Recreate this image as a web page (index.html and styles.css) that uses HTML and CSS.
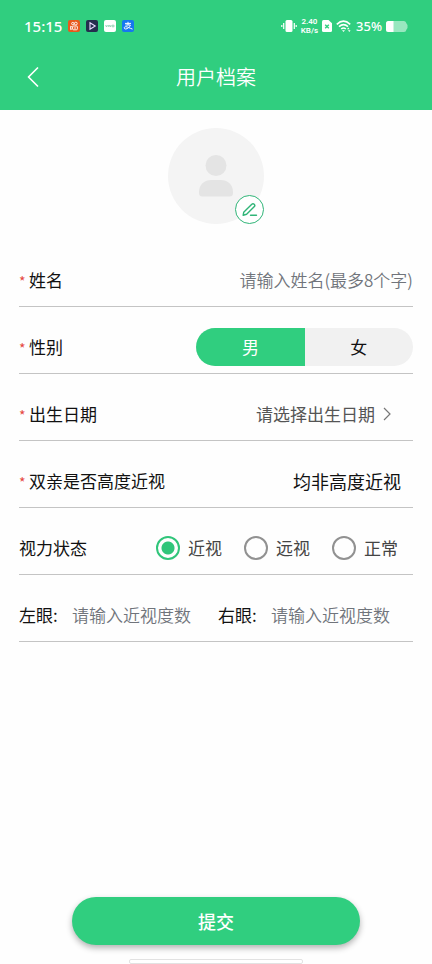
FILE: index.html
```html
<!DOCTYPE html>
<html lang="zh-CN">
<head>
<meta charset="utf-8">
<meta name="viewport" content="width=device-width, initial-scale=1">
<title>用户档案</title>
<link rel="stylesheet" href="styles.css">
</head>
<body>
<header class="header">
  <div class="status">
    <div class="status-group">
      <span class="clock">15:15</span>
      <svg class="app" viewBox="0 0 12 12" aria-hidden="true"><rect width="12" height="12" rx="2" fill="#e8591c"/><g fill="none" stroke="#fff" stroke-width=".9"><circle cx="4.8" cy="3.6" r="1.2"/><circle cx="7.8" cy="3.6" r="1.4"/><rect x="4.6" y="6" width="4.8" height="3.8" rx="1"/><path d="M4.6 7.2L2.6 6.3v3.2l2-.9M6 8h2"/></g></svg>
      <svg class="app" viewBox="0 0 12 12" aria-hidden="true"><rect width="12" height="12" rx="2" fill="#242e4e"/><path d="M4 2.800L9.200 6 4 9.200z" fill="none" stroke="#e9dcff" stroke-width="1.100"/></svg>
      <svg class="app" viewBox="0 0 12 12" aria-hidden="true"><rect width="12" height="12" rx="2" fill="#fff"/><path d="M1.600 5l.9 2 .9-2M4.400 5v2M5.300 5l.9 2 .9-2M8 5.200h2v1.600H8z" fill="none" stroke="#7cc9a5" stroke-width=".7"/></svg>
      <svg class="app" viewBox="0 0 12 12" aria-hidden="true"><rect width="12" height="12" rx="2" fill="#1677f0"/><path d="M3 3.400h6M6 1.800v3.200M3.400 5h5C7.800 7 5.600 9 3.600 9 1.800 9 1.800 6.700 3.700 6.700c2 0 4 1.500 6.800 2.400" fill="none" stroke="#fff" stroke-width="1"/></svg>
    </div>
    <div class="status-group status-right">
      <svg class="vibrate" viewBox="0 0 16 14" aria-hidden="true"><rect x="4.500" y="1" width="7" height="12" rx="1.500" fill="#fff"/><path d="M2.700 4v6M13.300 4v6M.8 6v2M15.200 6v2" stroke="#fff" stroke-width="1.200"/></svg>
      <span class="speed"><span>2.40</span><span>KB/s</span></span>
      <svg class="sim" viewBox="0 0 10 12" aria-hidden="true"><path d="M1.500 0H6.500L10 3.200V10.500Q10 12 8.500 12H1.500Q0 12 0 10.500V1.500Q0 0 1.500 0z" fill="#fff"/><path d="M3.200 4.700l3.600 3.600M6.800 4.700L3.200 8.300" stroke="#30ce7f" stroke-width="1.400"/></svg>
      <svg class="wifi" viewBox="0 0 16 12" aria-hidden="true"><path d="M.8 4.300Q7.500-2 14.200 4.300M3 6.700q4.500-4 9 0M5.200 9q2.300-2 4.600 0" fill="none" stroke="#fff" stroke-width="1.600"/><path d="M6 10.200h3L7.500 12zM11 9.200l1.300-1.600 1.300 1.600zM12 10.200h2.600L13.300 12z" fill="#fff"/></svg>
      <span class="percent">35%</span>
      <svg class="battery" viewBox="0 0 22 11" aria-hidden="true"><path d="M2.500 0H18Q20 0 20.500 2.500L21.500 4v3L20.500 8.500Q20 11 18 11H2.500Q0 11 0 8.500v-6Q0 0 2.500 0z" fill="#fff" fill-opacity=".5"/><path d="M2.500 0H7.500V11H2.500Q0 11 0 8.500v-6Q0 0 2.500 0z" fill="#fff"/></svg>
    </div>
  </div>
  <div class="nav">
    <button class="back" type="button" aria-label="返回"><svg viewBox="0 0 12 20" aria-hidden="true"><path d="M10.500 1L1.500 10l9 9" fill="none" stroke="#fff" stroke-width="1.700" stroke-linecap="round" stroke-linejoin="round"/></svg></button>
    <h1 class="title">用户档案</h1>
  </div>
</header>

<form class="profile">
  <div class="avatar">
    <svg class="person" viewBox="0 0 36 42" aria-hidden="true"><circle cx="18" cy="10.500" r="10.500" fill="#e4e4e4"/><path d="M1 37C1 29 7 25 13 25h10c6 0 12 4 12 12v1q0 3.500-3.500 3.500h-27Q1 41.500 1 38z" fill="#e4e4e4"/></svg>
    <button class="edit" type="button" aria-label="编辑头像"><svg viewBox="0 0 16 16" aria-hidden="true"><g fill="none" stroke="#30b578" stroke-width="1.400" stroke-linecap="round" stroke-linejoin="round"><path d="M1.700 10.300L9.800 2.200Q11 1.200 12.200 2.200q1.200 1.200.2 2.400L4.600 12.300 1.200 13.200z"/><path d="M8.500 13.300h6"/></g></svg></button>
  </div>

  <div class="row">
    <label class="label required" for="name">姓名</label>
    <input class="field name" id="name" type="text" maxlength="8" placeholder="请输入姓名(最多8个字)">
  </div>
  <div class="row" role="radiogroup" aria-labelledby="sex">
    <span class="label required" id="sex">性别</span>
    <div class="segments">
      <label class="segment"><input type="radio" name="sex" checked><span>男</span></label>
      <label class="segment"><input type="radio" name="sex"><span>女</span></label>
    </div>
  </div>
  <div class="row">
    <label class="label required" for="birth">出生日期</label>
    <button class="date" id="birth" type="button">请选择出生日期<svg viewBox="0 0 8 14" aria-hidden="true"><path d="M1 1l6 6-6 6" fill="none" stroke="#777" stroke-width="1.200"/></svg></button>
  </div>
  <div class="row">
    <label class="label required" for="parents">双亲是否高度近视</label>
    <select class="parents" id="parents"><option>均非高度近视</option></select>
  </div>
  <div class="row" role="radiogroup" aria-labelledby="vision">
    <span class="label" id="vision">视力状态</span>
    <div class="choices">
      <label class="choice"><input type="radio" name="vision" checked>近视</label>
      <label class="choice"><input type="radio" name="vision">远视</label>
      <label class="choice"><input type="radio" name="vision">正常</label>
    </div>
  </div>
  <div class="row eyes">
    <div class="eye"><label class="label" for="left">左眼:</label><input class="field" id="left" type="text" placeholder="请输入近视度数"></div>
    <div class="eye"><label class="label" for="right">右眼:</label><input class="field" id="right" type="text" placeholder="请输入近视度数"></div>
  </div>

  <button class="submit" type="submit">提交</button>
</form>
<div class="handle"></div>
</body>
</html>
```

FILE: styles.css
```css
* {
  box-sizing: border-box;
}

body {
  margin: 0;
  min-height: 100vh;
  display: flex;
  flex-direction: column;
  background: #fefefe;
  color: #111;
  font: 17px/24px "Noto Sans CJK SC", sans-serif;
}

button, input, select {
  margin: 0;
  padding: 0;
  border: 0;
  background: none;
  color: inherit;
  font: inherit;
}

svg {
  display: block;
  flex: none;
}

.header {
  background: #30ce7f;
  color: #fff;
}

.status {
  display: flex;
  justify-content: space-between;
  align-items: center;
  height: 44px;
  padding: 8px 24px 0;
  font-family: "Noto Sans", sans-serif;
}

.status-group {
  display: flex;
  align-items: center;
  gap: 6px;
}

.status-right {
  gap: 4px;
}

.clock {
  font-size: 15px;
  font-weight: 500;
}

.app {
  width: 12px;
  height: 12px;
}

.vibrate {
  width: 16px;
  height: 14px;
}

.speed {
  display: flex;
  flex-direction: column;
  align-items: center;
  font: 600 8px/9px Roboto, sans-serif;
}

.sim {
  width: 10px;
  height: 12px;
}

.wifi {
  width: 16px;
  height: 12px;
}

.percent {
  font-size: 13px;
  font-weight: 500;
}

.battery {
  width: 22px;
  height: 11px;
}

.nav {
  display: grid;
  grid-template-columns: 1fr auto 1fr;
  align-items: center;
  height: 66px;
  padding: 0 16px;
}

.back {
  display: grid;
  place-items: center;
  width: 34px;
  height: 40px;
}

.back svg {
  width: 12px;
  height: 20px;
}

.title {
  margin: 0;
  font-size: 20px;
  font-weight: 350;
}

.profile {
  flex: 1;
  display: flex;
  flex-direction: column;
  padding: 18px 19px 14px;
}

.avatar {
  position: relative;
  align-self: center;
  display: grid;
  place-items: center;
  width: 96px;
  height: 96px;
  margin-bottom: 16px;
  border-radius: 50%;
  background: #f4f4f4;
}

.person {
  width: 36px;
  height: 42px;
}

.edit {
  position: absolute;
  right: 0;
  bottom: 0;
  display: grid;
  place-items: center;
  width: 29px;
  height: 29px;
  border: 1px solid #30b578;
  border-radius: 50%;
  background: #fff;
}

.edit svg {
  width: 16px;
  height: 16px;
}

.row {
  display: flex;
  align-items: center;
  justify-content: space-between;
  height: 67px;
  padding-top: 14px;
  border-bottom: 1px solid #c4c4c4;
}

.label {
  flex: none;
}

.required::before {
  content: "*";
  display: inline-block;
  width: 10px;
  color: #e5473f;
  font-size: 14px;
}

.field {
  flex: 1;
  min-width: 0;
  outline: 0;
}

.field::placeholder {
  color: #70747b;
  font-weight: 350;
  opacity: 1;
}

.name {
  text-align: right;
}

.segments {
  display: flex;
  width: 55%;
  height: 38px;
  overflow: hidden;
  border-radius: 19px;
  background: #f1f1f1;
}

.segment {
  flex: 1;
  display: flex;
}

.segment input {
  appearance: none;
  width: 0;
}

.segment span {
  flex: 1;
  display: grid;
  place-items: center;
}

.segment input:checked + span {
  background: #30ce7f;
  color: #fff;
}

.date {
  display: flex;
  align-items: center;
  gap: 8px;
  padding-right: 22px;
  color: #555;
}

.date svg {
  width: 8px;
  height: 14px;
}

.parents {
  appearance: none;
  padding-right: 12px;
  font-size: 18px;
}

.choices {
  display: flex;
  gap: 22px;
  padding-right: 15px;
  color: #444;
}

.choice {
  display: flex;
  align-items: center;
  gap: 8px;
}

.choice input {
  appearance: none;
  width: 24px;
  height: 24px;
  border: 2px solid #919191;
  border-radius: 50%;
}

.choice input:checked {
  border-color: #30c57a;
  background: radial-gradient(circle, #30c57a 6px, transparent 7px);
}

.eyes {
  display: grid;
  grid-template-columns: 1fr 1fr;
  gap: 4px;
}

.eye {
  display: flex;
  min-width: 0;
}

.eye .label {
  width: 53px;
}

.submit {
  height: 48px;
  margin: auto 53px 0;
  border-radius: 24px;
  background: #30ce7f;
  box-shadow: 0 3px 6px rgba(0, 0, 0, 0.3);
  color: #fff;
  font-size: 18px;
  font-weight: 500;
}

.handle {
  align-self: center;
  width: 174px;
  height: 5px;
  border: 1px solid #e2e2e2;
  border-radius: 2px;
  background: #fff;
}
```
